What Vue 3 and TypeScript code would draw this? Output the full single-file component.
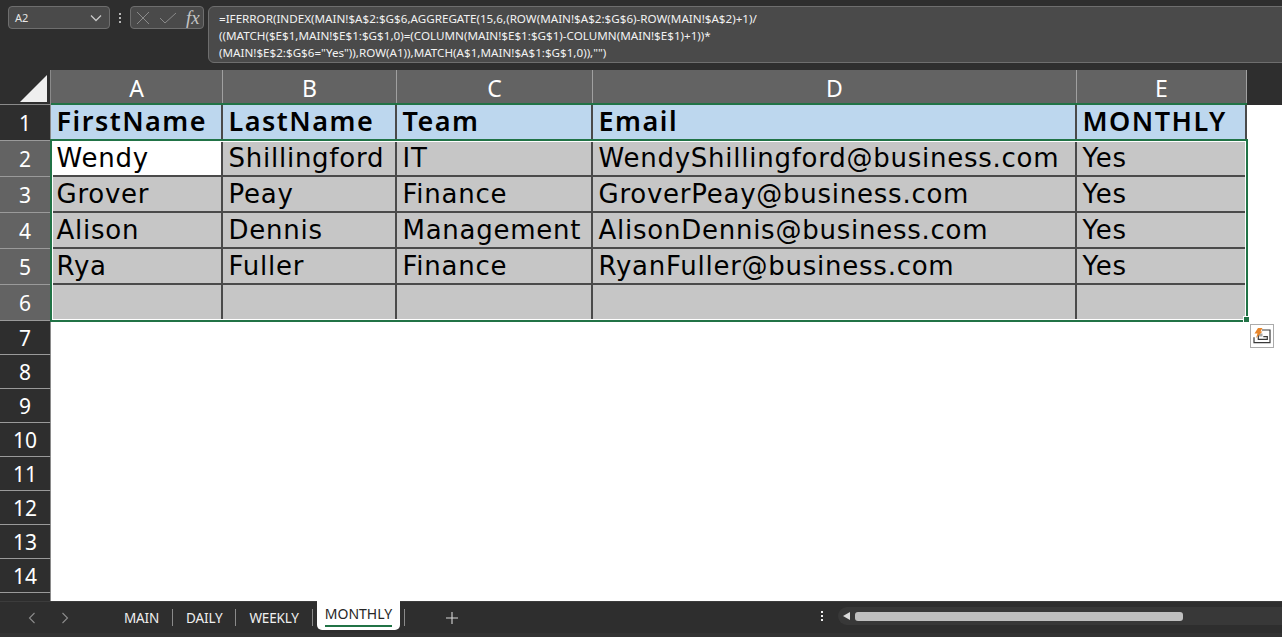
<script setup lang="ts">
const columns = ['A', 'B', 'C', 'D', 'E']

const headers = ['FirstName', 'LastName', 'Team', 'Email', 'MONTHLY']

const rows = [
  ['Wendy', 'Shillingford', 'IT', 'WendyShillingford@business.com', 'Yes'],
  ['Grover', 'Peay', 'Finance', 'GroverPeay@business.com', 'Yes'],
  ['Alison', 'Dennis', 'Management', 'AlisonDennis@business.com', 'Yes'],
  ['Rya', 'Fuller', 'Finance', 'RyanFuller@business.com', 'Yes'],
  ['', '', '', '', '']
]

const emptyRows = [7, 8, 9, 10, 11, 12, 13, 14, '']

const tabs = ['MAIN', 'DAILY', 'WEEKLY']
</script>

<template>
  <div class="excel">
    <!-- formula bar -->
    <div class="formula-bar">
      <div class="name-box">
        <span>A2</span>
        <svg width="12" height="8" viewBox="0 0 12 8"><path d="M1 1.5l5 5 5-5" fill="none" stroke="#c8c8c8" stroke-width="1.3" /></svg>
      </div>
      <div class="dots"><i></i><i></i><i></i></div>
      <div class="fx-box">
        <svg width="14" height="14" viewBox="0 0 14 14"><path d="M1 1l12 12M13 1L1 13" fill="none" stroke="#8a8a8a" stroke-width="1" /></svg>
        <svg width="18" height="14" viewBox="0 0 18 14"><path d="M1 7l5 5L17 2" fill="none" stroke="#8a8a8a" stroke-width="1" /></svg>
        <span class="fx">fx</span>
      </div>
      <div class="formula">
        =IFERROR(INDEX(MAIN!$A$2:$G$6,AGGREGATE(15,6,(ROW(MAIN!$A$2:$G$6)-ROW(MAIN!$A$2)+1)/<br />
        ((MATCH($E$1,MAIN!$E$1:$G$1,0)=(COLUMN(MAIN!$E$1:$G$1)-COLUMN(MAIN!$E$1)+1))*<br />
        (MAIN!$E$2:$G$6="Yes")),ROW(A1)),MATCH(A$1,MAIN!$A$1:$G$1,0)),"")
      </div>
    </div>

    <!-- sheet -->
    <div class="sheet">
      <div class="corner"><div class="triangle"></div></div>
      <div v-for="c in columns" :key="c" class="col-head">{{ c }}</div>
      <div class="col-rest"></div>

      <div class="row-head dark">1</div>
      <div v-for="h in headers" :key="h" class="cell head-cell">{{ h }}</div>
      <div class="blank"></div>

      <template v-for="(row, r) in rows" :key="r">
        <div class="row-head lit">{{ r + 2 }}</div>
        <div
          v-for="(val, c) in row"
          :key="c"
          class="cell"
          :class="{ active: r === 0 && c === 0 }"
        >{{ val }}</div>
        <div class="blank"></div>
      </template>

      <template v-for="(n, i) in emptyRows" :key="i">
        <div class="row-head dark">{{ n }}</div>
        <div class="blank wide"></div>
      </template>

      <!-- selection outline and paste options -->
      <div class="selection"><div class="handle"></div></div>
      <div class="paste-options">
        <svg width="22" height="22" viewBox="0 0 22 22">
          <path d="M11 5h8v12.7H3v-5.4" fill="none" stroke="#3a3a3a" stroke-width="1.2" />
          <path d="M12.3 11.7h4v2.6H7.3V10" fill="none" stroke="#3a3a3a" stroke-width="1.2" />
          <rect x="8" y="8.500" width="3.500" height="3" fill="#a8a8a8" />
          <path d="M7 3h4.500L9.500 6.500H11.500L5 13l1.500-4.500H3.500z" fill="#e8862a" />
        </svg>
      </div>
    </div>

    <!-- tab bar -->
    <div class="tab-bar">
      <div class="nav">
        <svg width="8" height="12" viewBox="0 0 8 12"><path d="M6.5 1L1.5 6l5 5" fill="none" stroke="#8c8c8c" stroke-width="1.1" /></svg>
        <svg width="8" height="12" viewBox="0 0 8 12"><path d="M1.5 1l5 5-5 5" fill="none" stroke="#8c8c8c" stroke-width="1.1" /></svg>
      </div>
      <div class="tabs">
        <template v-for="t in tabs" :key="t">
          <span class="tab">{{ t }}</span>
          <span class="sep"></span>
        </template>
        <span class="tab current">MONTHLY</span>
        <span class="sep after"></span>
        <svg class="plus" width="12" height="12" viewBox="0 0 12 12"><path d="M6 0v12M0 6h12" stroke="#d8d8d8" stroke-width="1.1" /></svg>
      </div>
      <div class="scroll-area">
        <div class="dots light"><i></i><i></i><i></i></div>
        <div class="scrollbar">
          <span class="arrow"></span>
          <span class="thumb"></span>
        </div>
      </div>
    </div>
    <div class="status-strip"></div>
  </div>
</template>

<style>
html, body {
  margin: 0;
  background: #fff;
  overflow: hidden;
}
</style>

<style scoped>
.excel {
  width: 1282px;
  height: 637px;
  display: flex;
  flex-direction: column;
  overflow: hidden;
  font-family: "Noto Sans", "Open Sans", sans-serif;
}

.formula-bar {
  height: 70px;
  flex: none;
  box-sizing: border-box;
  background: #2e2e2e;
  display: flex;
  align-items: flex-start;
  padding: 6px 0 0 8px;
}

.name-box {
  width: 102px;
  height: 23px;
  flex: none;
  box-sizing: border-box;
  background: #4a4a4a;
  border: 1px solid #6e6e6e;
  border-radius: 4px;
  color: #e6e6e6;
  font-size: 11px;
  display: flex;
  align-items: center;
  justify-content: space-between;
  padding: 0 7px 0 6px;
}

.dots {
  width: 20px;
  height: 23px;
  flex: none;
  display: flex;
  flex-direction: column;
  align-items: center;
  justify-content: center;
  gap: 2px;
}

.dots i {
  width: 2px;
  height: 2px;
  background: #b8b8b8;
}

.dots.light i {
  background: #f0f0f0;
}

.fx-box {
  width: 74px;
  height: 23px;
  flex: none;
  box-sizing: border-box;
  background: #4a4a4a;
  border: 1px solid #6e6e6e;
  border-radius: 4px;
  display: flex;
  align-items: center;
  gap: 9px;
  padding-left: 5px;
}

.fx {
  font-family: "Liberation Serif", serif;
  font-style: italic;
  font-size: 19px;
  line-height: 21px;
  color: #c4c4c4;
}

.formula {
  margin-left: 4px;
  width: 1090px;
  height: 57px;
  flex: none;
  box-sizing: border-box;
  background: #4a4a4a;
  border: 1px solid #6e6e6e;
  border-radius: 6px;
  color: #f2f2f2;
  font-size: 11.65px;
  line-height: 17px;
  padding: 3px 10px;
  white-space: nowrap;
}

.sheet {
  position: relative;
  flex: 1;
  min-height: 0;
  background: #fff;
  display: grid;
  grid-template-columns: 51px 172px 174px 196px 484px 170px 35px;
  grid-template-rows: 35px repeat(6, 36px) repeat(9, 34px);
  overflow: hidden;
}

.corner {
  background: #2e2e2e;
  position: relative;
  border-right: 1px solid #8a8a8a;
  border-bottom: 1px solid #8a8a8a;
}

.triangle {
  position: absolute;
  right: 3px;
  bottom: 2px;
  width: 0;
  height: 0;
  border-left: 27px solid transparent;
  border-bottom: 27px solid #efefef;
}

.col-head {
  background: #636363;
  color: #fff;
  font-size: 23px;
  text-align: center;
  line-height: 36px;
  box-sizing: border-box;
  border-right: 1px solid #a0a0a0;
}

.col-rest {
  background: #2e2e2e;
}

.row-head {
  color: #fff;
  font-size: 21px;
  text-align: center;
  box-sizing: border-box;
  border-right: 1px solid #8a8a8a;
  border-bottom: 1px solid #9a9a9a;
  display: flex;
  align-items: center;
  justify-content: center;
}

.row-head.dark {
  background: #2e2e2e;
}

.row-head.lit {
  background: #636363;
}

.cell {
  background: #c6c6c6;
  color: #000;
  font-family: "DejaVu Sans", sans-serif;
  font-size: 26px;
  letter-spacing: 0.75px;
  line-height: 34px;
  padding-left: 5.5px;
  box-sizing: border-box;
  border-right: 2px solid #4a4a4a;
  border-bottom: 2px solid #4a4a4a;
  white-space: nowrap;
}

.head-cell {
  background: #bdd7ee;
  font-family: "Noto Sans", sans-serif;
  font-weight: 600;
  font-size: 27px;
  letter-spacing: 1.5px;
  line-height: 32px;
  box-shadow: 0 -2px 0 #217346;
  border-bottom: 2px solid #217346;
}

.cell.active {
  background: #fff;
}

.blank {
  background: #fff;
}

.blank.wide {
  grid-column: 2 / -1;
}

.selection {
  position: absolute;
  left: 50px;
  top: 69px;
  width: 1198px;
  height: 183px;
  box-sizing: border-box;
  border: 2px solid #217346;
  box-shadow: inset 0 0 0 1px #fff;
  pointer-events: none;
}

.handle {
  position: absolute;
  right: -4px;
  bottom: -3px;
  width: 5px;
  height: 5px;
  background: #217346;
  border: 1px solid #fff;
}

.paste-options {
  position: absolute;
  left: 1250px;
  top: 254px;
  width: 24px;
  height: 24px;
  box-sizing: border-box;
  background: #fff;
  border: 1px solid #ababab;
  display: flex;
  align-items: center;
  justify-content: center;
}

.tab-bar {
  height: 32px;
  flex: none;
  box-sizing: border-box;
  background: #2e2e2e;
  border-top: 1px solid #3c3c3c;
  display: flex;
  align-items: center;
}

.nav {
  width: 118px;
  flex: none;
  display: flex;
  gap: 25px;
  padding-left: 28px;
  box-sizing: border-box;
}

.tabs {
  flex: 1;
  align-self: stretch;
  display: flex;
  align-items: center;
  color: #f0f0f0;
  font-size: 13.5px;
  letter-spacing: -0.15px;
}

.tab {
  padding: 0 6px;
  line-height: 24px;
}

.sep {
  width: 1px;
  height: 17px;
  background: #8a8a8a;
  margin: 0 7px;
}

.tab.current {
  align-self: flex-start;
  background: #fff;
  color: #262626;
  font-size: 14px;
  height: 29px;
  margin: -1px 0 0 -3px;
  padding: 0 8px;
  box-sizing: border-box;
  border-radius: 0 0 5px 5px;
  position: relative;
  line-height: 26px;
  letter-spacing: 0;
}

.tab.current::after {
  content: "";
  position: absolute;
  left: 8px;
  right: 8px;
  bottom: 3px;
  height: 2px;
  background: #217346;
}

.sep.after {
  margin: 0 0 0 4px;
}

.plus {
  margin-left: 41px;
}

.scroll-area {
  width: 468px;
  flex: none;
  display: flex;
  align-items: center;
  margin-bottom: 3px;
}

.scroll-area .dots {
  width: 16px;
}

.scrollbar {
  flex: 1;
  height: 18px;
  margin-left: 8px;
  background: #383838;
  border-radius: 9px 0 0 9px;
  display: flex;
  align-items: center;
  padding-left: 5px;
}

.arrow {
  width: 0;
  height: 0;
  border-top: 4.5px solid transparent;
  border-bottom: 4.5px solid transparent;
  border-right: 7px solid #dcdcdc;
}

.thumb {
  width: 328px;
  height: 9px;
  margin-left: 5px;
  background: #bfbfbf;
  border-radius: 3px;
}

.status-strip {
  height: 4px;
  flex: none;
  background: #333;
}
</style>
